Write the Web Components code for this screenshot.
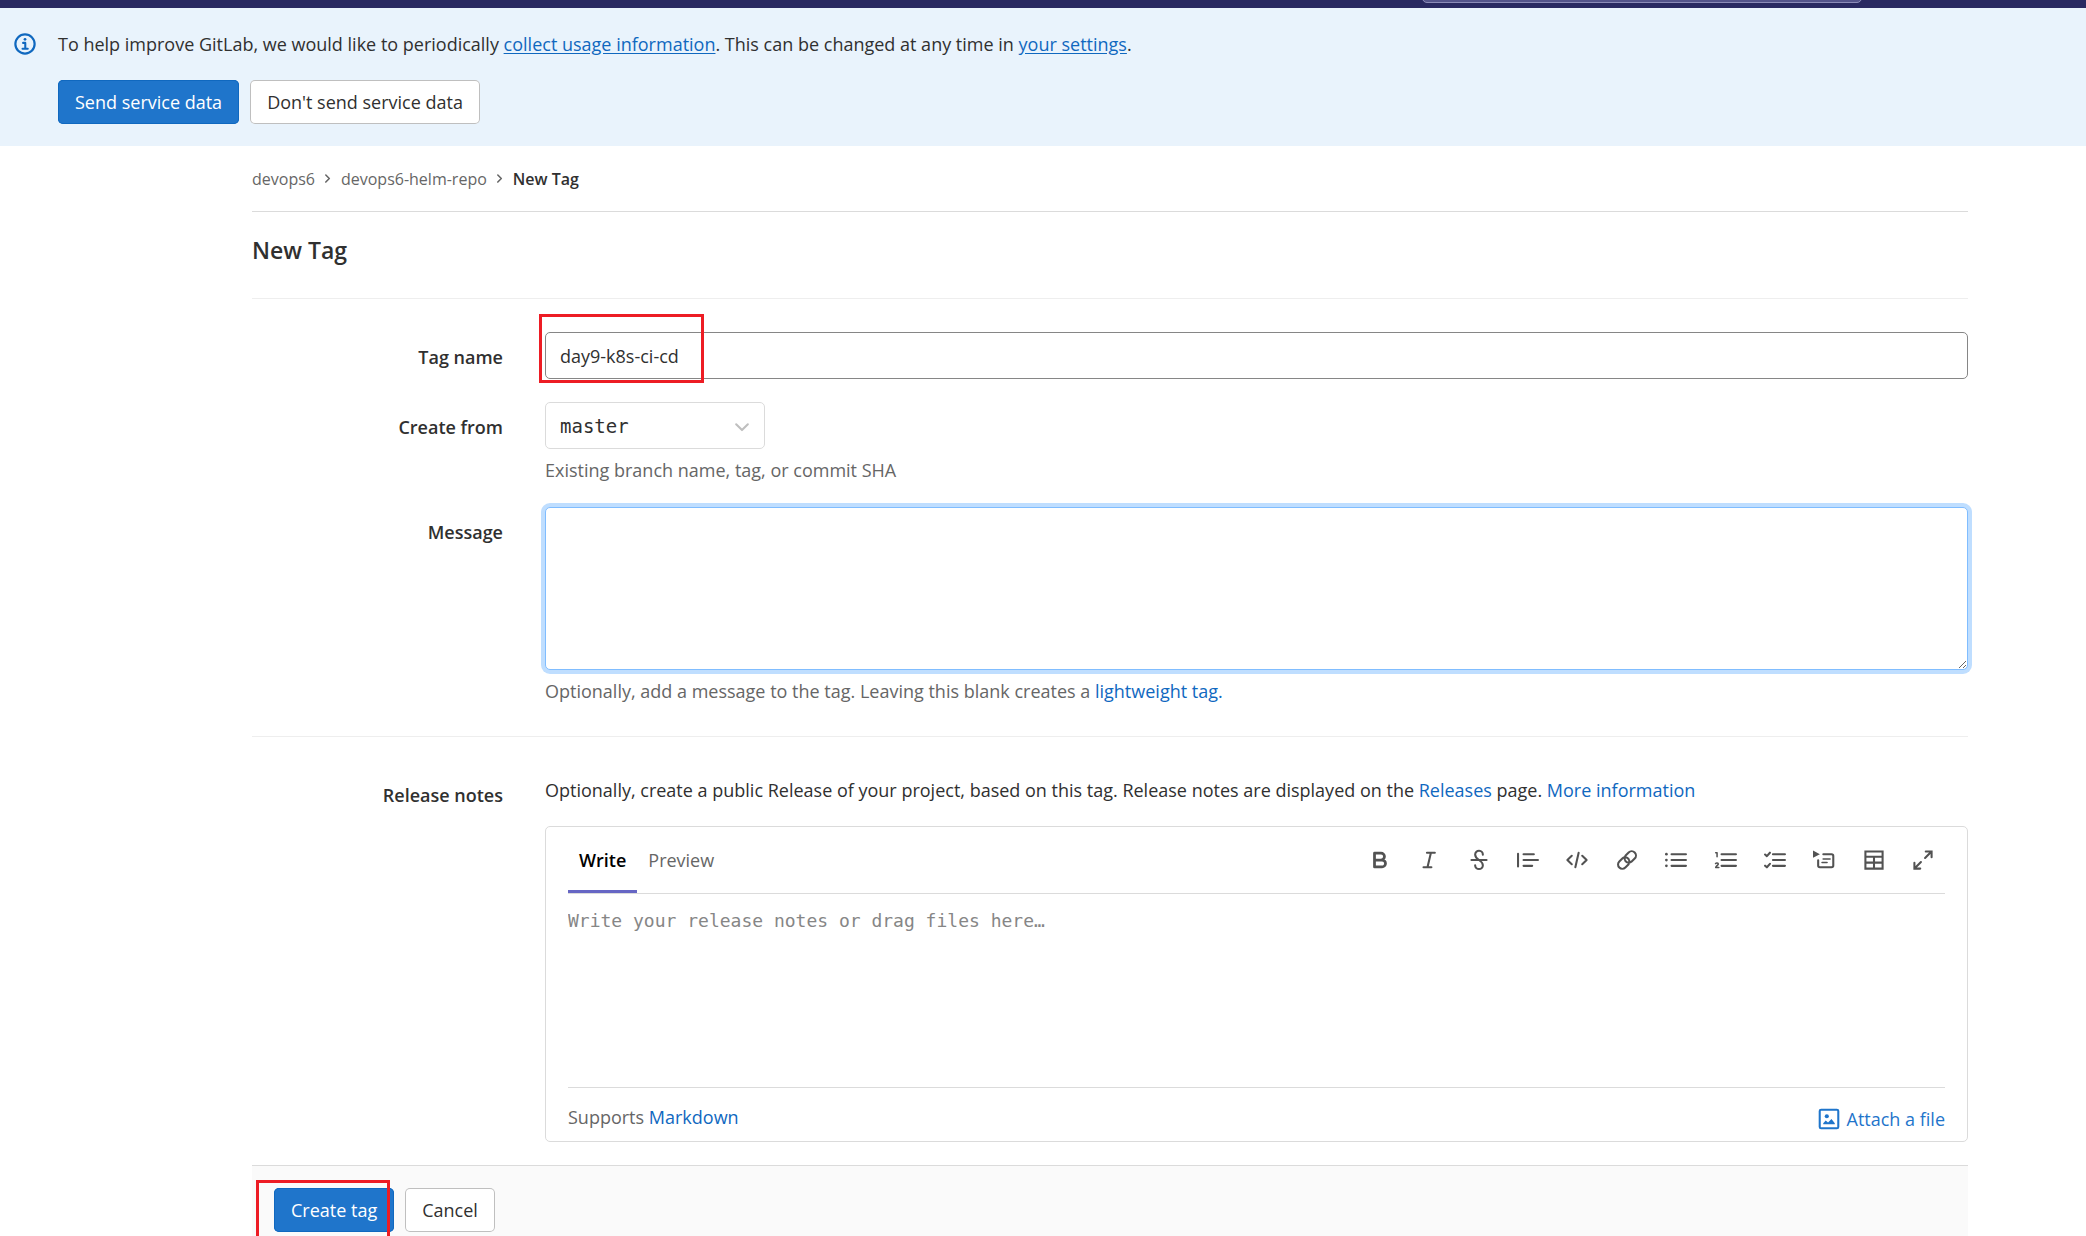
<!DOCTYPE html>
<html lang="en">
<head>
<meta charset="utf-8">
<meta name="viewport" content="width=device-width, initial-scale=1">
<title>New Tag</title>
<style>
    :root {
        --font: "Open Sans", "Noto Sans", sans-serif;
        --mono: "DejaVu Sans Mono", monospace;
        --text: #303030;
        --muted: #666;
        --link: #1068bf;
        --blue: #1f75cb;
        --border: #dbdbdb;
        --border-light: #eee;
        --fs-sm: 16px;
        --fs: 18px;
        --fs-lg: 23px;
        --side-left: 252px;
        --side-right: 118px;
    }

    body {
        margin: 0;
        height: 100vh;
        overflow: hidden;
        font: var(--fs)/28px var(--font);
        color: var(--text);
        background: #fff;
    }
</style>
</head>
<body>
<top-bar></top-bar>
<service-banner></service-banner>
<tag-page></tag-page>

<script>
const icons = {
    info: `<circle cx="8" cy="8" r="7" stroke-width="1.6"/><circle cx="8" cy="4.6" r="1" fill="currentColor" stroke="none"/><path d="M6.6 7.2h1.6v4.2M6.2 11.5h3.8"/>`,
    bold: `<path stroke-width="2" d="M4 3h4.75a2.5 2.5 0 0 1 0 5H4zM4 8h5.5a2.5 2.5 0 0 1 0 5H4z"/>`,
    italic: `<path d="M6.5 2.75h5.75M4 13.25h5.75M9.4 2.75 6.9 13.25"/>`,
    strike: `<path d="M10.8 4.2a2.8 2.8 0 0 0-5.6-.2c0 2 1.2 3 2.8 4s2.8 2 2.8 3.8a2.8 2.8 0 0 1-5.6 0M2.5 8h11"/>`,
    quote: `<path d="M.75 3.5v9.2M4.75 3.75h7.5M4.75 8h10.5M4.75 12.25h6.3"/>`,
    code: `<path d="M4.2 4.9 1 8l3.2 3.1M11.8 4.9 15 8l-3.2 3.1M9.2 2.8 6.8 13.3"/>`,
    link: `<path d="M6.8 8.6a3 3 0 0 0 4.6.5l2.2-2.2a3.1 3.1 0 0 0-4.4-4.4L7 4.7a3.1 3.1 0 0 0-.6 3M9.2 7.4a3 3 0 0 0-4.6-.5L2.4 9.1a3.1 3.1 0 0 0 4.4 4.4L9 11.3a3.1 3.1 0 0 0 .6-3"/>`,
    list: `<path d="M4.75 3.75h10.5M4.75 8h10.5M4.75 12.25h10.5"/><g fill="currentColor" stroke="none"><circle cx="1" cy="3.75" r="1"/><circle cx="1" cy="8" r="1"/><circle cx="1" cy="12.25" r="1"/></g>`,
    numbers: `<path d="M4.75 3.75h10.5M4.75 8h10.5M4.75 12.25h10.5"/><path stroke-width="1.1" d="M.5 2.8h1v2.8M.4 10.6c.4-.6 2-.6 2 .3 0 .8-1.5 1.2-1.9 2.5h2.3"/>`,
    tasks: `<path d="M6.5 3.75h8.75M6.5 8h8.75M6.5 12.25h8.75M.8 4l1.3 1.2 2.2-2.5M.8 12.1l1.3 1.2 2.2-2.5"/>`,
    details: `<path d="M0 1.1v5.3l5-2.6z" fill="currentColor" stroke="none"/><path d="M7.5 3.75h6A1.25 1.25 0 0 1 14.75 5v7a1.25 1.25 0 0 1-1.25 1.25H5A1.25 1.25 0 0 1 3.75 12V8.2"/><path stroke-width="1.2" d="M7.4 7.3h5M6.6 9.8h3.6"/>`,
    table: `<path stroke-linejoin="miter" d="M1.75 1.75h12.5v12.5H1.75zM1.75 5.6h12.5M1.75 9.9h12.5M8 5.6v8.6"/>`,
    expand: `<path stroke-linejoin="miter" d="M10 1.75h4.25V6M14 2 9.5 6.5M6 14.25H1.75V10M2 14l4.5-4.5"/>`,
    media: `<rect x="1.25" y="1.25" width="13.5" height="13.5" rx="1"/><circle cx="6.4" cy="6" r="1.5" fill="currentColor" stroke="none"/><path d="M3.8 11.8V11l1.8-2 1.7 1.5L9.8 8l2.4 3v.8z" fill="currentColor" stroke="none"/>`,
    chevron: `<path stroke-width="1.8" d="m5.5 3.5 4 4-4 4"/>`,
    down: `<path d="M3.75 6 8 10.25 12.25 6"/>`
};

class UiIcon extends HTMLElement {
    constructor() {
        super();
        this.attachShadow({ mode: "open" });
    }

    connectedCallback() {
        this.shadowRoot.innerHTML = /* html */`
        <style>
            :host { display: inline-flex; flex: none; width: var(--icon-size, 22px); height: var(--icon-size, 22px); }
            svg { width: 100%; height: 100%; overflow: visible; }
        </style>
        <svg viewBox="0 0 16 16" fill="none" stroke="currentColor" stroke-width="1.5"
            stroke-linecap="round" stroke-linejoin="round" aria-hidden="true">${icons[this.getAttribute("name")]}</svg>`;
    }
}

class UiButton extends HTMLElement {
    constructor() {
        super();
        this.attachShadow({ mode: "open" });
    }

    connectedCallback() {
        this.shadowRoot.innerHTML = /* html */`
        <style>
            :host { display: inline-block; }
            button {
                display: block;
                height: 44px;
                padding: 0 17px;
                font: inherit;
                color: var(--text);
                background: #fff;
                border: 0;
                border-radius: 5px;
                box-shadow: inset 0 0 0 1px #bfbfbf;
                cursor: pointer;
            }
            :host([confirm]) button {
                color: #fff;
                background: var(--blue);
                box-shadow: inset 0 0 0 1px var(--link);
            }
        </style>
        <button type="button"><slot></slot></button>`;
    }
}

class TopBar extends HTMLElement {
    constructor() {
        super();
        this.attachShadow({ mode: "open" });
    }

    connectedCallback() {
        this.shadowRoot.innerHTML = /* html */`
        <style>
            :host {
                display: flex;
                justify-content: flex-end;
                align-items: flex-end;
                height: 8px;
                overflow: hidden;
                background: #292961;
            }
            input {
                box-sizing: border-box;
                width: 440px;
                height: 44px;
                margin: 0 224px 5px 0;
                background: #54548a;
                border: 1px solid #8c8cb8;
                border-radius: 5px;
            }
        </style>
        <input type="search" aria-label="Search GitLab">`;
    }
}

class ServiceBanner extends HTMLElement {
    constructor() {
        super();
        this.attachShadow({ mode: "open" });
    }

    connectedCallback() {
        this.shadowRoot.innerHTML = /* html */`
        <style>
            :host {
                display: flex;
                gap: 22px;
                padding: 22px 14px;
                background: #e9f3fc;
            }
            ui-icon { margin-top: 3px; color: var(--link); }
            p { margin: 0 0 22px; }
            a { color: var(--link); text-underline-offset: 2px; }
            .actions { display: flex; gap: 11px; }
        </style>
        <ui-icon name="info"></ui-icon>
        <div>
            <p>To help improve GitLab, we would like to periodically <a href="#">collect usage information</a>. This can be changed at any time in <a href="#">your settings</a>.</p>
            <div class="actions">
                <ui-button confirm>Send service data</ui-button>
                <ui-button>Don't send service data</ui-button>
            </div>
        </div>`;
    }
}

class BreadCrumbs extends HTMLElement {
    constructor() {
        super();
        this.attachShadow({ mode: "open" });
    }

    connectedCallback() {
        this.shadowRoot.innerHTML = /* html */`
        <style>
            :host { display: block; border-bottom: 1px solid var(--border); }
            nav {
                display: flex;
                align-items: center;
                height: 65px;
                gap: 6px;
                font-size: var(--fs-sm);
            }
            a { color: var(--muted); text-decoration: none; }
            a:last-child { color: var(--text); font-weight: 600; }
            ui-icon { --icon-size: 14px; color: var(--muted); }
        </style>
        <nav aria-label="Breadcrumbs">
            <a href="#">devops6</a>
            <ui-icon name="chevron"></ui-icon>
            <a href="#">devops6-helm-repo</a>
            <ui-icon name="chevron"></ui-icon>
            <a href="#">New Tag</a>
        </nav>`;
    }
}

/* Label column on the left, control column on the right */
class FormRow extends HTMLElement {
    constructor() {
        super();
        this.attachShadow({ mode: "open" });
    }

    connectedCallback() {
        this.shadowRoot.innerHTML = /* html */`
        <style>
            :host {
                display: grid;
                grid-template-columns: 251px minmax(0, 1fr);
                column-gap: 42px;
            }
            .label { padding-top: 11px; text-align: right; font-weight: 600; }
            :host([compact]) .label { padding-top: 5px; }
        </style>
        <div class="label"><slot name="label"></slot></div>
        <div><slot></slot></div>`;
    }
}

class MarkdownEditor extends HTMLElement {
    constructor() {
        super();
        this.attachShadow({ mode: "open" });
    }

    static get tools() {
        return [
            ["bold", "Add bold text"],
            ["italic", "Add italic text"],
            ["strike", "Add strikethrough text"],
            ["quote", "Insert a quote"],
            ["code", "Insert code"],
            ["link", "Add a link"],
            ["list", "Add a bullet list"],
            ["numbers", "Add a numbered list"],
            ["tasks", "Add a checklist"],
            ["details", "Add a collapsible section"],
            ["table", "Add a table"],
            ["expand", "Go full screen"]
        ];
    }

    connectedCallback() {
        this.shadowRoot.innerHTML = /* html */`
        <style>
            :host {
                display: block;
                padding: 0 22px;
                border: 1px solid var(--border);
                border-radius: 5px;
            }
            button { font: inherit; background: none; border: 0; padding: 0; cursor: pointer; }
            header {
                display: flex;
                justify-content: space-between;
                height: 66px;
                border-bottom: 1px solid var(--border);
            }
            .tabs { display: flex; }
            .tabs button { padding: 0 11px; color: var(--muted); }
            .tabs button[aria-selected="true"] {
                color: #000;
                font-weight: 600;
                box-shadow: inset 0 -3px #6666c4;
            }
            .tools {
                display: flex;
                justify-content: space-between;
                align-items: center;
                width: 587px;
            }
            .tools button { display: grid; place-items: center; width: 44px; height: 44px; color: #525252; }
            textarea {
                display: block;
                box-sizing: border-box;
                width: 100%;
                height: 194px;
                padding: 13px 0;
                font: var(--fs)/28px var(--mono);
                border: 0;
                border-bottom: 1px solid var(--border);
                outline: 0;
                resize: none;
                color: var(--text);
            }
            textarea::placeholder { color: #868686; }
            footer {
                display: flex;
                justify-content: space-between;
                align-items: flex-start;
                padding: 15px 0 8px;
                color: var(--muted);
            }
            a { color: var(--link); text-decoration: none; }
            .attach { display: flex; align-items: center; gap: 7px; padding-top: 2px; color: var(--blue); }
        </style>
        <header>
            <div class="tabs" role="tablist">
                <button type="button" role="tab" aria-selected="true">Write</button>
                <button type="button" role="tab" aria-selected="false">Preview</button>
            </div>
            <div class="tools">
                ${MarkdownEditor.tools.map(([icon, title]) => `<button type="button" aria-label="${title}"><ui-icon name="${icon}"></ui-icon></button>`).join("")}
            </div>
        </header>
        <textarea aria-label="Release notes" placeholder="Write your release notes or drag files here…"></textarea>
        <footer>
            <span>Supports <a href="#">Markdown</a></span>
            <button type="button" class="attach"><ui-icon name="media"></ui-icon>Attach a file</button>
        </footer>`;
    }
}

class TagForm extends HTMLElement {
    constructor() {
        super();
        this.attachShadow({ mode: "open" });
    }

    connectedCallback() {
        this.shadowRoot.innerHTML = /* html */`
        <style>
            :host { display: block; }
            form-row { margin-bottom: 23px; }
            a { color: var(--link); text-decoration: none; }
            p { margin: 0; }
            .help { margin-top: 7px; color: var(--muted); }
            input, select, textarea {
                display: block;
                box-sizing: border-box;
                width: 100%;
                padding: 0 14px;
                font: inherit;
                color: var(--text);
                background: #fff;
                border: 1px solid #868686;
                border-radius: 5px;
                outline: 0;
            }
            input, select { height: 47px; }
            .field { position: relative; }
            /* red highlight drawn over the start of the field */
            .mark {
                position: absolute;
                box-sizing: border-box;
                border: 3px solid #ed1c24;
                pointer-events: none;
            }
            .field .mark { left: -6px; top: -18px; width: 165px; height: 69px; }
            .actions .mark { left: 4px; top: 14px; width: 134px; height: 80px; }
            .ref { position: relative; width: 220px; }
            .ref ui-icon { position: absolute; right: 12px; top: 14px; --icon-size: 22px; color: #bfbfbf; pointer-events: none; }
            select { appearance: none; font: 19px/28px var(--mono); border-color: var(--border); }
            textarea {
                height: 163px;
                padding: 8px 14px;
                border-color: #80bdff;
                box-shadow: 0 0 0 4px #bfdeff;
                resize: vertical;
            }
            hr { margin: 31px 0 39px; border: 0; border-top: 1px solid var(--border-light); }
            markdown-editor { margin-top: 22px; }
            .actions {
                position: relative;
                display: flex;
                gap: 11px;
                padding: 22px;
                background: #fafafa;
                border-top: 1px solid var(--border);
            }
        </style>
        <form>
            <form-row>
                <label slot="label" for="tag">Tag name</label>
                <div class="field">
                    <input id="tag" type="text" value="day9-k8s-ci-cd">
                    <span class="mark"></span>
                </div>
            </form-row>
            <form-row>
                <label slot="label" for="ref">Create from</label>
                <div class="ref">
                    <select id="ref"><option>master</option></select>
                    <ui-icon name="down"></ui-icon>
                </div>
                <p class="help">Existing branch name, tag, or commit SHA</p>
            </form-row>
            <form-row>
                <label slot="label" for="message">Message</label>
                <textarea id="message"></textarea>
                <p class="help">Optionally, add a message to the tag. Leaving this blank creates a <a href="#">lightweight tag.</a></p>
            </form-row>
            <hr>
            <form-row compact>
                <span slot="label">Release notes</span>
                <p>Optionally, create a public Release of your project, based on this tag. Release notes are displayed on the <a href="#">Releases</a> page. <a href="#">More information</a></p>
                <markdown-editor></markdown-editor>
            </form-row>
            <div class="actions">
                <ui-button confirm>Create tag</ui-button>
                <ui-button>Cancel</ui-button>
                <span class="mark"></span>
            </div>
        </form>`;
    }
}

class TagPage extends HTMLElement {
    constructor() {
        super();
        this.attachShadow({ mode: "open" });
    }

    connectedCallback() {
        this.shadowRoot.innerHTML = /* html */`
        <style>
            :host { display: block; padding: 0 var(--side-right) 0 var(--side-left); }
            h1 {
                margin: 0 0 33px;
                padding: 22px 0 32px;
                font-size: var(--fs-lg);
                line-height: 32px;
                font-weight: 600;
                border-bottom: 1px solid var(--border-light);
            }
        </style>
        <bread-crumbs></bread-crumbs>
        <h1>New Tag</h1>
        <tag-form></tag-form>`;
    }
}

customElements.define("ui-icon", UiIcon);
customElements.define("ui-button", UiButton);
customElements.define("top-bar", TopBar);
customElements.define("service-banner", ServiceBanner);
customElements.define("bread-crumbs", BreadCrumbs);
customElements.define("form-row", FormRow);
customElements.define("markdown-editor", MarkdownEditor);
customElements.define("tag-form", TagForm);
customElements.define("tag-page", TagPage);
</script>
</body>
</html>
